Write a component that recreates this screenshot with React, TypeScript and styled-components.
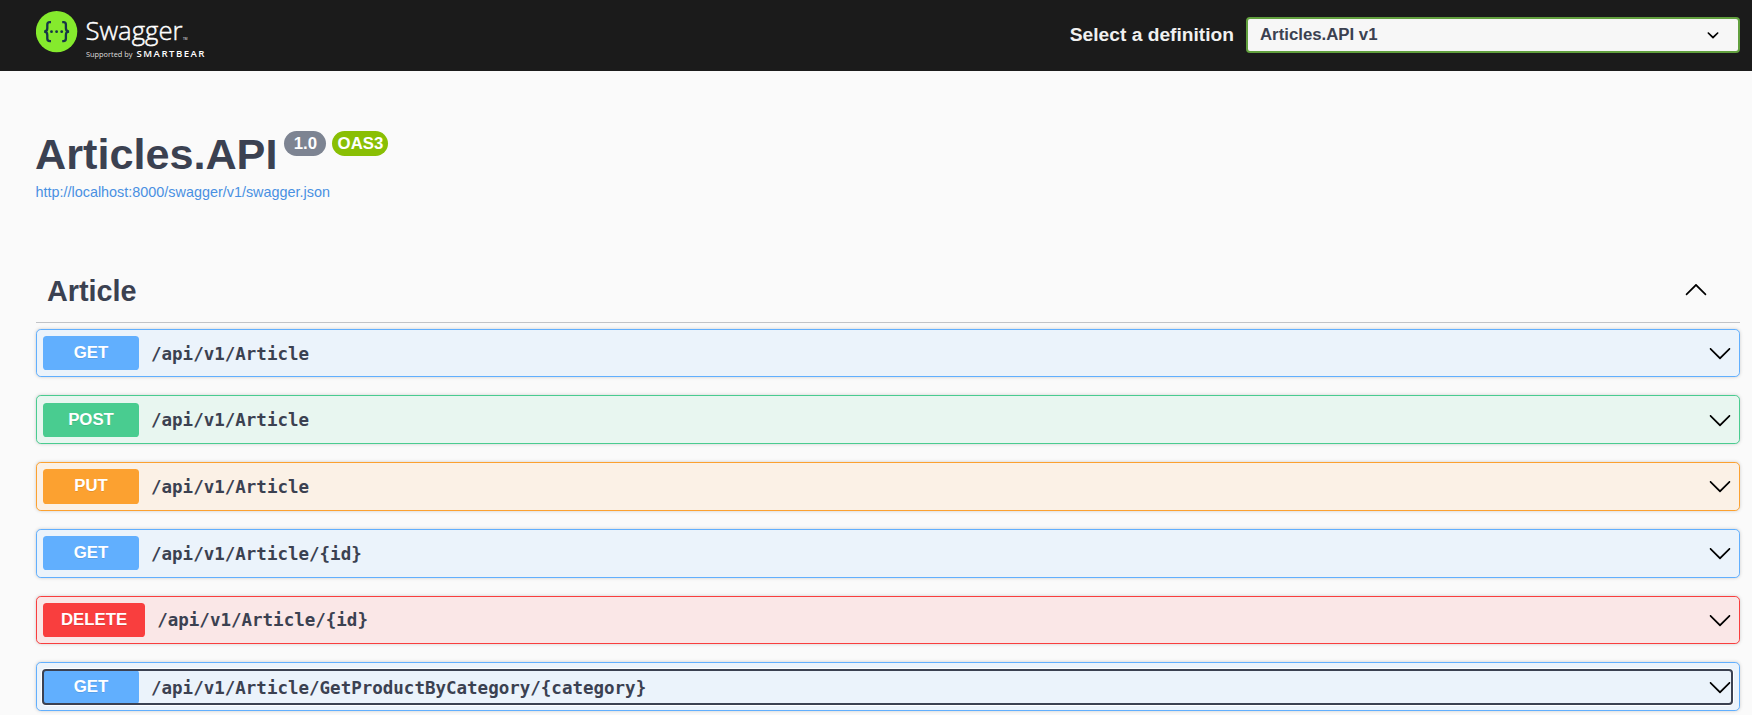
import React from 'react';
import styled, { createGlobalStyle, css } from 'styled-components';

const GlobalStyle = createGlobalStyle`
  *, *::before, *::after { box-sizing: border-box; }
  html, body { margin: 0; height: 715px; overflow: hidden; }
  body {
    background: #fafafa;
    color: #3b4151;
    font-family: "Liberation Sans", Arial, sans-serif;
  }
`;

type Method = 'GET' | 'POST' | 'PUT' | 'DELETE';

interface Endpoint {
  method: Method;
  path: string;
  focused?: boolean;
}

const palette: Record<Method, { main: string; tint: string }> = {
  GET: { main: '#61affe', tint: '#ebf3fb' },
  POST: { main: '#49cc90', tint: '#e8f6f0' },
  PUT: { main: '#fca130', tint: '#fbf1e6' },
  DELETE: { main: '#f93e3e', tint: '#fae7e7' },
};

const endpoints: Endpoint[] = [
  { method: 'GET', path: '/api/v1/Article' },
  { method: 'POST', path: '/api/v1/Article' },
  { method: 'PUT', path: '/api/v1/Article' },
  { method: 'GET', path: '/api/v1/Article/{id}' },
  { method: 'DELETE', path: '/api/v1/Article/{id}' },
  { method: 'GET', path: '/api/v1/Article/GetProductByCategory/{category}', focused: true },
];

const Topbar = styled.header`
  display: flex;
  align-items: center;
  justify-content: space-between;
  height: 71px;
  padding: 0 12px 1px 36px;
  background: #1b1b1b;
`;

const LogoSvg = styled.svg`
  display: block;
  width: 172px;
  height: 52px;
`;

const Definition = styled.label`
  display: flex;
  align-items: center;
  color: #f0f0f0;
  font-size: 19.2px;
  font-weight: 700;
  line-height: 22px;
`;

const SelectBox = styled.div`
  display: flex;
  align-items: center;
  justify-content: space-between;
  width: 494px;
  height: 36px;
  margin-left: 12px;
  padding: 0 13px 0 12px;
  border: 2px solid #62a03f;
  border-radius: 4px;
  background: #f7f7f7;
  color: #3b4151;
  font-size: 16.8px;
`;

const Main = styled.main`
  padding: 0 12px 0 36px;
`;

const Info = styled.section`
  height: 193px;
  padding-top: 60px;
`;

const TitleRow = styled.div`
  display: flex;
  align-items: flex-start;
`;

const Title = styled.h1`
  margin: 0 7px 0 -1px;
  padding-bottom: 2px;
  font-size: 43.2px;
  font-weight: 700;
  line-height: 46px;
`;

const Badge = styled.span<{ $color: string; $width: number }>`
  width: ${(p) => p.$width}px;
  height: 25px;
  margin-right: 6px;
  border-radius: 13px;
  background: ${(p) => p.$color};
  color: #fff;
  font-size: 16.8px;
  font-weight: 700;
  line-height: 25px;
  text-align: center;
`;

const SpecLink = styled.a`
  display: block;
  width: fit-content;
  margin: 5px 0 0 -0.5px;
  color: #4990e2;
  font-size: 14.4px;
  line-height: 17px;
  text-decoration: none;
`;

const TagHeader = styled.div`
  display: flex;
  align-items: center;
  justify-content: space-between;
  height: 59px;
  margin-bottom: 5.7px;
  padding: 0 32px 8px 11px;
  border-bottom: 1px solid #c1c3c7;
`;

const TagName = styled.h2`
  margin: 4px 0 0;
  font-size: 28.8px;
  font-weight: 700;
  line-height: 34px;
`;

const Operations = styled.div`
  display: flex;
  flex-direction: column;
  gap: 18px;
`;

const Operation = styled.div<{ $method: Method }>`
  height: 48.73px;
  padding: 6.14px 6px;
  border: 1px solid ${(p) => palette[p.$method].main};
  border-radius: 4.8px;
  background: ${(p) => palette[p.$method].tint};
  box-shadow: 0 0 3.6px rgba(0, 0, 0, 0.19);
`;

const Summary = styled.div<{ $focused?: boolean }>`
  display: flex;
  align-items: center;
  height: 100%;
  margin-right: 1px;
  ${(p) =>
    p.$focused &&
    css`
      height: 34px;
      margin-top: 0.6px;
      outline: 2px solid #3b4151;
      outline-offset: -1px;
      border-radius: 3px;
      box-shadow: 0 0 0 2px #fff;
    `}
`;

const MethodLabel = styled.span<{ $method: Method }>`
  min-width: 96px;
  height: 100%;
  padding: 0 18px;
  border-radius: 3.6px;
  background: ${(p) => palette[p.$method].main};
  color: #fff;
  font-size: 16.8px;
  font-weight: 700;
  line-height: 34px;
  text-align: center;
  text-shadow: 0 1px 0 rgba(0, 0, 0, 0.1);
`;

const Path = styled.span`
  flex: 1;
  padding: 1px 12px 0;
  font-family: "DejaVu Sans Mono", monospace;
  font-size: 17.5px;
  font-weight: 700;
  line-height: 22px;
`;

const Icon = styled.svg`
  display: block;
  flex: none;
  width: 24px;
  height: 24px;
  fill: #000;
`;

const ChevronDown = () => (
  <Icon viewBox="0 0 20 20">
    <path d="M17.418 6.109c.272-.268.709-.268.979 0s.271.701 0 .969l-7.908 7.83c-.27.268-.707.268-.979 0l-7.908-7.83c-.27-.268-.27-.701 0-.969.271-.268.709-.268.979 0L10 13.25l7.418-7.141z" />
  </Icon>
);

const ChevronUp = () => (
  <Icon viewBox="0 0 20 20">
    <path d="M17.418 14.908c.272.268.709.268.979 0s.271-.701 0-.969l-7.908-7.83c-.27-.268-.707-.268-.979 0l-7.908 7.83c-.27.268-.27.701 0 .969.271.268.709.268.979 0L10 7.767l7.418 7.141z" />
  </Icon>
);

const SelectArrow = () => (
  <Icon viewBox="0 0 20 20">
    <path d="M13.418 7.859c.271-.268.709-.268.978 0 .27.268.272.701 0 .969l-3.908 3.83c-.27.268-.707.268-.979 0l-3.908-3.83c-.27-.267-.27-.701 0-.969.271-.268.709-.268.978 0L10 11l3.418-3.141z" />
  </Icon>
);

const Logo = () => (
  <LogoSvg viewBox="0 0 172 52" role="img" aria-label="Swagger">
    <circle cx="20.6" cy="22.6" r="20.7" fill="#85ea2d" />
    <g fill="none" stroke="#173647" strokeWidth="2.3">
      <path d="M15 13.100h-1.300c-1.700 0-2.400.9-2.400 2.600v3.600c0 2-.8 3.300-3.200 3.300 2.400 0 3.200 1.300 3.200 3.300v3.600c0 1.700.7 2.600 2.400 2.600H15" />
      <path d="M26.200 13.100h1.300c1.700 0 2.400.9 2.400 2.600v3.600c0 2 .8 3.300 3.200 3.300-2.400 0-3.200 1.300-3.200 3.300v3.600c0 1.700-.7 2.600-2.400 2.600h-1.300" />
    </g>
    <g fill="#173647">
      <circle cx="15.500" cy="22.700" r="1.400" />
      <circle cx="20.600" cy="22.700" r="1.400" />
      <circle cx="25.700" cy="22.700" r="1.400" />
    </g>
    <g fill="#fff">
      <text x="49.500" y="31" stroke="#fff" strokeWidth="0.45" fontFamily="'Open Sans', 'Noto Sans', sans-serif" fontWeight="300" fontSize="26" textLength="97" lengthAdjust="spacingAndGlyphs">Swagger</text>
      <text x="147" y="31" fontFamily="'Open Sans', sans-serif" fontSize="3">TM</text>
      <text x="50" y="47.500" fillOpacity="0.85" fontFamily="'Open Sans', 'Noto Sans', sans-serif" fontSize="7.300" textLength="46.500" lengthAdjust="spacingAndGlyphs">Supported by</text>
      <text x="100.500" y="48" fontFamily="'Open Sans', 'Noto Sans', sans-serif" fontWeight="600" fontSize="9.600" textLength="68" lengthAdjust="spacing">SMARTBEAR</text>
    </g>
  </LogoSvg>
);

export default function App() {
  return (
    <>
      <GlobalStyle />
      <Topbar>
        <Logo />
        <Definition>
          <span>Select a definition</span>
          <SelectBox>
            <span>Articles.API v1</span>
            <SelectArrow />
          </SelectBox>
        </Definition>
      </Topbar>
      <Main>
        <Info>
          <TitleRow>
            <Title>Articles.API</Title>
            <Badge $color="#7d8492" $width={42}>1.0</Badge>
            <Badge $color="#89bf04" $width={56}>OAS3</Badge>
          </TitleRow>
          <SpecLink>http://localhost:8000/swagger/v1/swagger.json</SpecLink>
        </Info>
        <TagHeader>
          <TagName>Article</TagName>
          <ChevronUp />
        </TagHeader>
        <Operations>
          {endpoints.map((e, i) => (
            <Operation key={i} $method={e.method}>
              <Summary $focused={e.focused}>
                <MethodLabel $method={e.method}>{e.method}</MethodLabel>
                <Path>{e.path}</Path>
                <ChevronDown />
              </Summary>
            </Operation>
          ))}
        </Operations>
      </Main>
    </>
  );
}
